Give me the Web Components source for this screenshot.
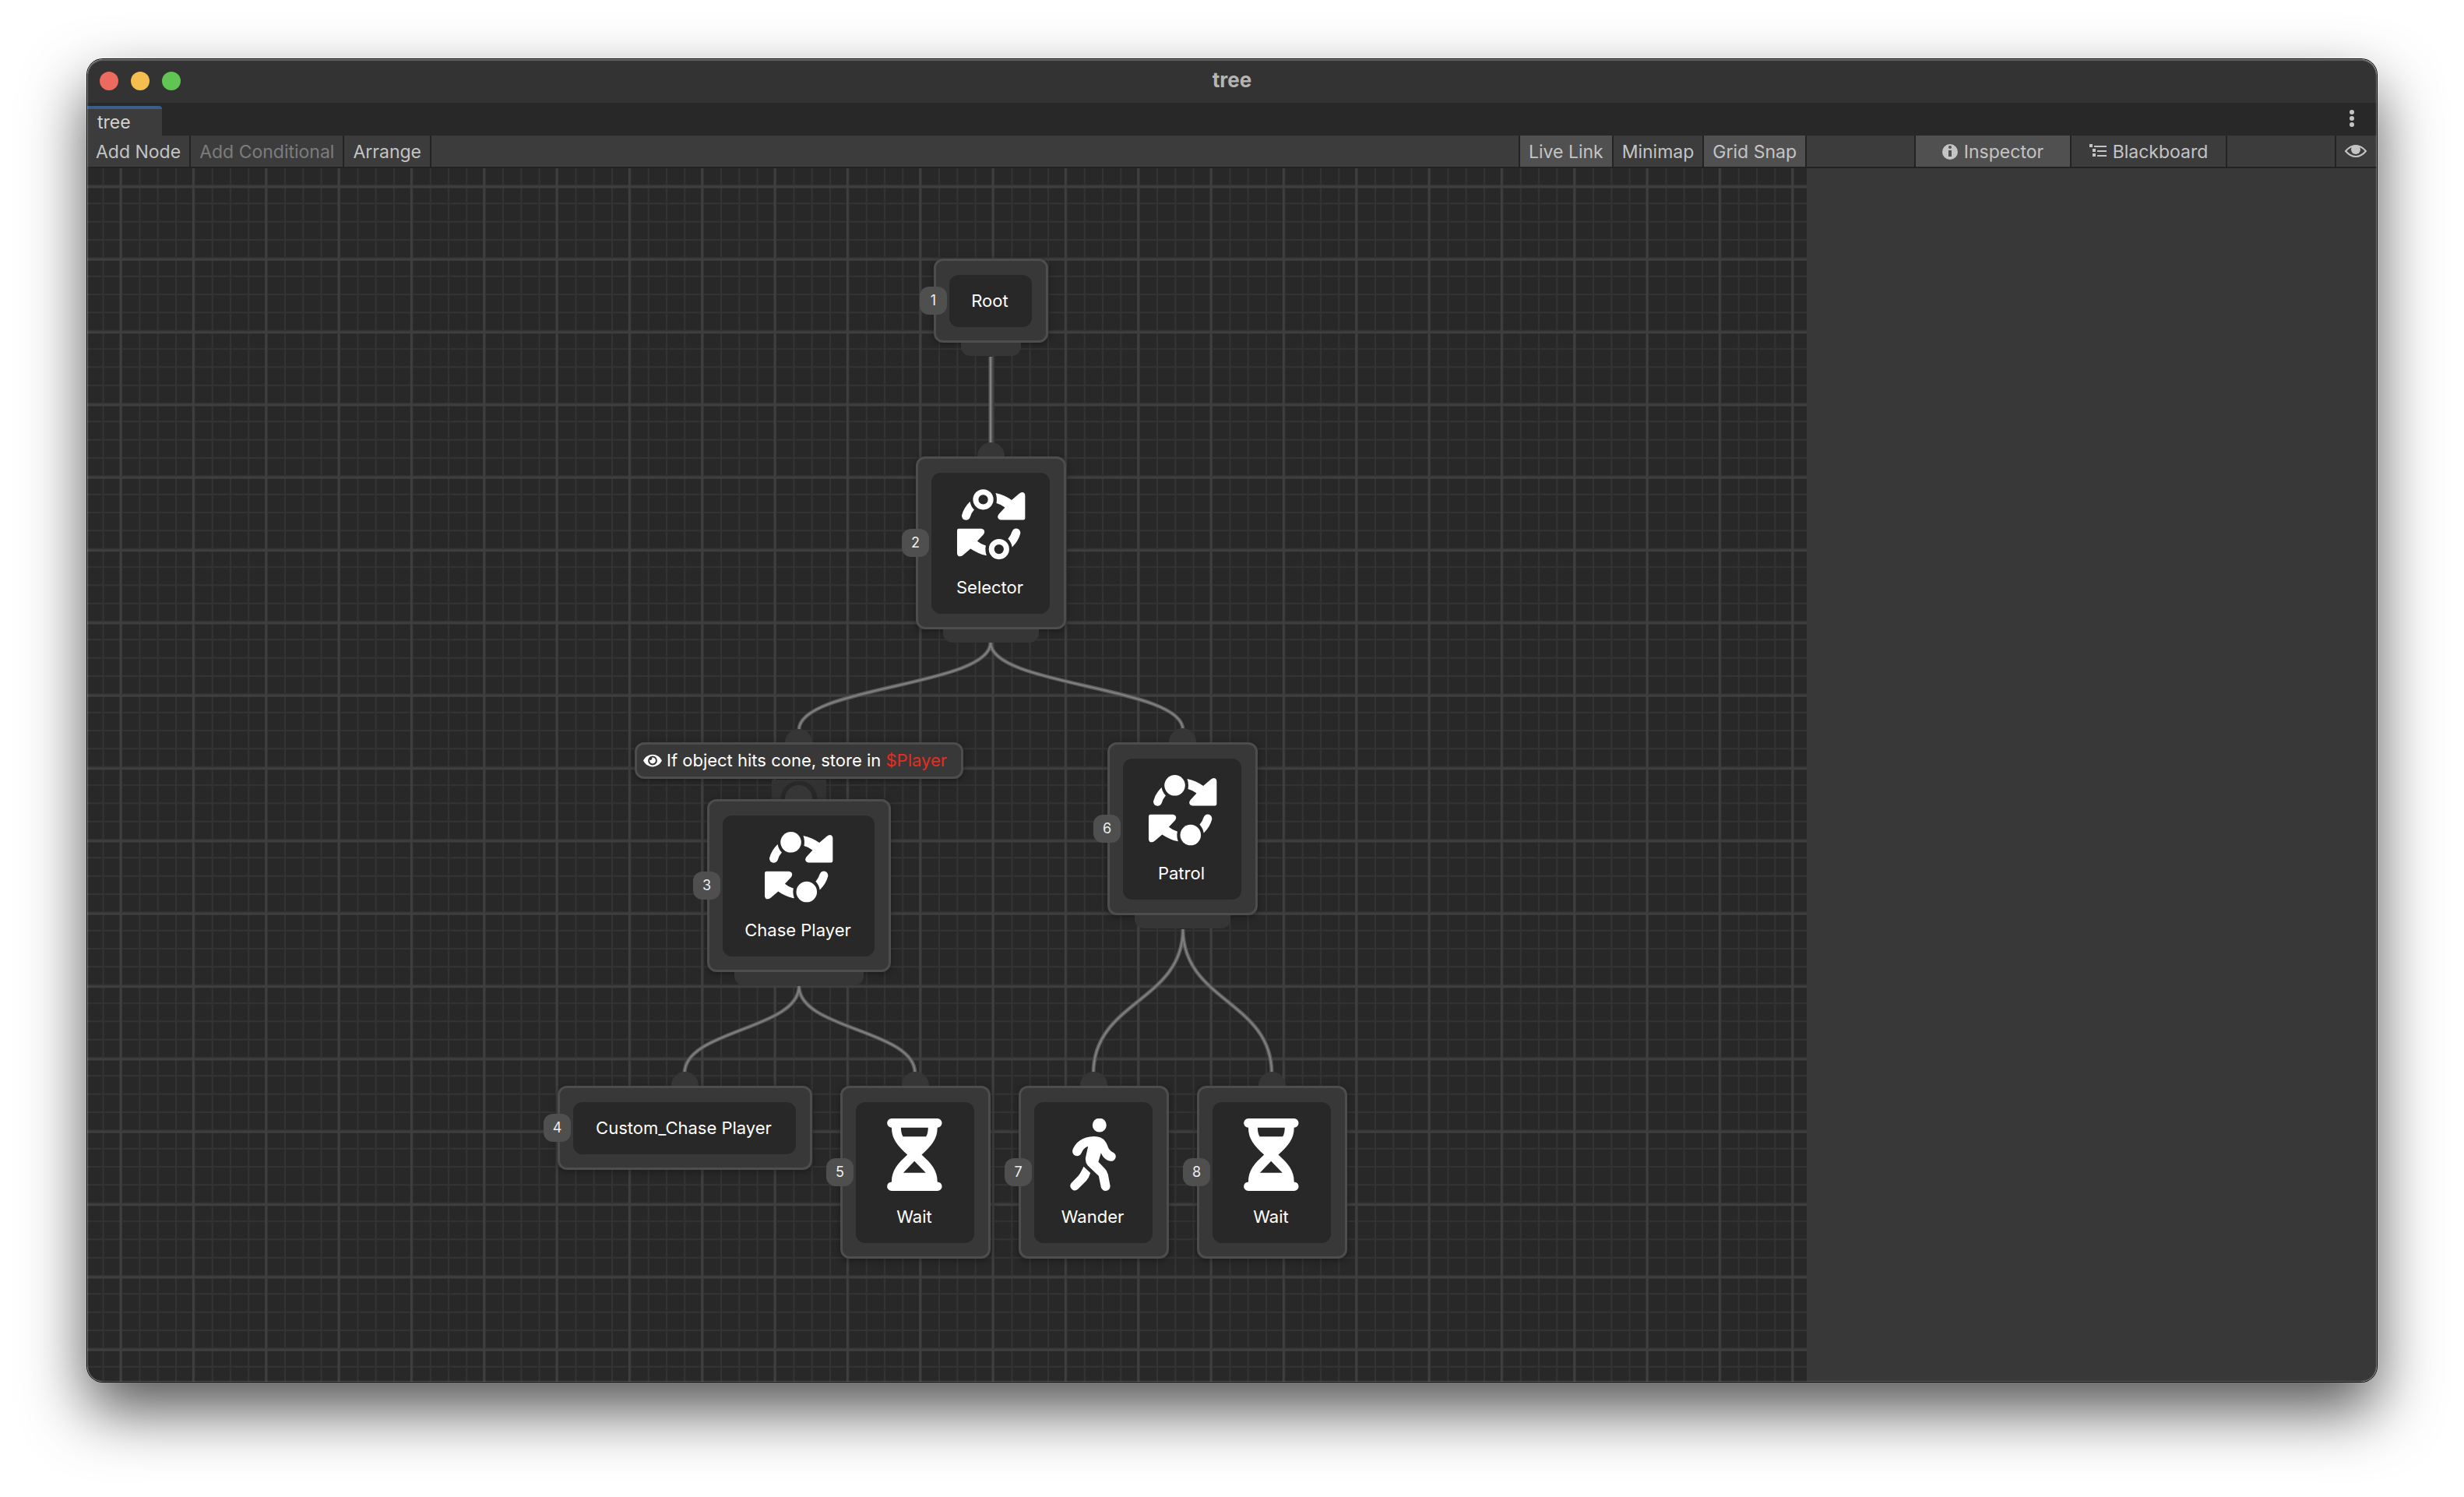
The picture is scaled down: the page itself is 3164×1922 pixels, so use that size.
<!DOCTYPE html>
<html lang="en">
<head>
<meta charset="utf-8">
<title>tree</title>
<style>
  html, body { margin: 0; height: 100%; background: #fff; }
  body {
    box-sizing: border-box;
    padding: 76px 112px 148px;
    overflow: hidden;
    font-family: Inter, "Liberation Sans", sans-serif;
    font-size: 23px;
    line-height: 30px;
    color: #c4c4c4;
    --bar: #3c3c3c;
    --line: #232323;
    --active: #505050;
    --panel: #383838;
    --deep: #282828;
  }
</style>
</head>
<body>
<app-window heading="tree">
  <tab-strip slot="tabs" label="tree"></tab-strip>
  <tool-bar slot="tools">
    <tool-button>Add Node</tool-button>
    <tool-button disabled>Add Conditional</tool-button>
    <tool-button>Arrange</tool-button>
    <tool-button slot="middle" pressed>Live Link</tool-button>
    <tool-button slot="middle">Minimap</tool-button>
    <tool-button slot="middle" pressed>Grid Snap</tool-button>
    <tool-button slot="panel" wide pressed icon="info">Inspector</tool-button>
    <tool-button slot="panel" wide icon="list">Blackboard</tool-button>
    <tool-button slot="end" icon="view" label="Toggle panel"></tool-button>
  </tool-bar>
  <graph-canvas>
    <graph-node index="1" style="left:1087px;top:116px;width:147px" out>Root</graph-node>
    <graph-node index="2" style="left:1064px;top:370px;width:193px" in out icon="selector">Selector</graph-node>
    <condition-node style="left:703px;top:737px;width:422px" variable="$Player">If object hits cone, store in</condition-node>
    <graph-node index="3" style="left:796px;top:810px;width:236px" in out icon="sequence">Chase Player</graph-node>
    <graph-node index="4" style="left:604px;top:1178px;width:327px" in>Custom_Chase Player</graph-node>
    <graph-node index="5" style="left:967px;top:1178px;width:193px" in icon="hourglass">Wait</graph-node>
    <graph-node index="6" style="left:1310px;top:737px;width:193px" in out icon="sequence">Patrol</graph-node>
    <graph-node index="7" style="left:1196px;top:1178px;width:193px" in icon="walk">Wander</graph-node>
    <graph-node index="8" style="left:1425px;top:1178px;width:193px" in icon="hourglass">Wait</graph-node>
  </graph-canvas>
  <side-panel slot="side"></side-panel>
</app-window>

<script>
const cycle = (circle) => `
  <svg viewBox="-5 0 280 280" width="93" height="93" fill="currentColor" aria-hidden="true">
    ${[0, 180].map(a => `<g transform="rotate(${a} 138.5 136)">
      <path d="M156 15C180 20 200 30 218 42L247 17Q257 9 266 14Q270 18 270 24V112Q270 119 263 119H176Q165 117 164 108Q164 102 168 97L192 71Q178 59 159 54Q163 34 156 15Z"/>
      <path d="M57 48Q60 66 73 80Q62 92 58 107Q53 120 41 120Q26 118 25 102Q32 72 57 48Z"/>
      ${circle}</g>`).join("")}
  </svg>`;

const ICONS = {
  selector: cycle(`<circle cx="108" cy="40" r="29" fill="none" stroke="currentColor" stroke-width="21"/>`),
  sequence: cycle(`<circle cx="108" cy="40" r="40"/>`),
  hourglass: `
    <svg viewBox="0 0 280 280" width="93" height="93" fill="currentColor" aria-hidden="true">
      <path fill-rule="evenodd" d="M51 0H228A17 17 0 0 1 228 35C228 80 204 106 167 140C204 174 228 200 228 245A17 17 0 0 1 228 280H51A17 17 0 0 1 51 245C51 200 75 174 112 140C75 106 51 80 51 35A17 17 0 0 1 51 0Z
        M87 35Q87 57 95 70H184Q192 57 192 35ZM139 165L96 210H183Z"/>
    </svg>`,
  walk: `
    <svg viewBox="0 0 280 280" width="93" height="93" fill="currentColor" aria-hidden="true">
      <circle cx="165" cy="26" r="27"/>
      <path d="M144 69C170 69 186 80 194 100C200 116 204 124 216 130A17.500 17.500 0 0 1 204 164C190 160 178 150 171 133L161 168L184 192Q195 202 198 216L206 258A17.500 17.500 0 0 1 171 266L162 222L120 182Q108 168 112 148L121 108Q103 114 95 134A17.500 17.500 0 0 1 62 120C70 96 98 69 144 69Z"/>
      <path d="M104 186L130 211Q124 230 114 241L81 274A17.500 17.500 0 0 1 56 250L83 222Q90 215 104 186Z"/>
    </svg>`,
  eye: `
    <svg viewBox="0 0 576 512" width="24" height="21" fill="currentColor" aria-hidden="true">
      <path d="M572.520 241.400C518.290 135.590 410.930 64 288 64S57.680 135.640 3.480 241.410a32.350 32.350 0 0 0 0 29.190C57.710 376.410 165.070 448 288 448s230.320-71.640 284.520-177.410a32.350 32.350 0 0 0 0-29.190zM288 400a144 144 0 1 1 144-144 143.930 143.930 0 0 1-144 144zm0-240a95.310 95.310 0 0 0-25.310 3.790 47.850 47.850 0 0 1-66.900 66.900A95.780 95.780 0 1 0 288 160z"/>
    </svg>`,
  info: `
    <svg viewBox="0 0 20 20" width="20" height="20" aria-hidden="true">
      <circle cx="10" cy="10" r="10" fill="currentColor"/>
      <circle cx="10" cy="4" r="2" fill="#505050"/>
      <path d="M8 8h4v8h-4z" fill="#505050"/>
    </svg>`,
  list: `
    <svg viewBox="0 0 22 20" width="22" height="20" fill="currentColor" aria-hidden="true">
      <path d="M0 0h4v4h-4zM6 2h16v2h-16zM4 6h4v4h-4zM10 8h12v2h-12zM4 12h4v4h-4zM10 14h12v2h-12z"/>
    </svg>`,
  view: `
    <svg viewBox="0 0 28 18" width="28" height="18" aria-hidden="true">
      <path d="M1 9Q7 2 14 2T27 9Q21 16 14 16T1 9Z" fill="none" stroke="currentColor" stroke-width="2"/>
      <circle cx="14" cy="7" r="6" fill="currentColor"/>
    </svg>`,
  more: `
    <svg viewBox="0 0 6 22" width="6" height="22" fill="currentColor" aria-hidden="true">
      <circle cx="3" cy="3" r="3"/><circle cx="3" cy="11" r="3"/><circle cx="3" cy="19" r="3"/>
    </svg>`
};

class Base extends HTMLElement {
  constructor() { super(); this.attachShadow({ mode: "open" }); }
  connectedCallback() { this.shadowRoot.innerHTML = this.view(); }
  attr(name) { return this.getAttribute(name) || ""; }
}

customElements.define("app-window", class extends Base {
  view() {
    return `<style>
      :host { position: relative; display: flex; flex-direction: column; height: 100%; border-radius: 20px;
        box-shadow: 0 0 0 1px #000, 0 36px 80px rgba(0,0,0,.68); }
      :host::after { content: ""; position: absolute; inset: 0; border-radius: 20px; pointer-events: none;
        box-shadow: inset 0 0 0 1px rgba(255,255,255,.22), inset 0 1px 1px 1px rgba(255,255,255,.2); }
      header { flex: none; display: grid; grid-template-columns: 1fr auto 1fr; align-items: center; height: 56px;
        padding: 0 16px; background: #333; border-radius: 20px 20px 0 0; }
      .lights { display: flex; gap: 16px; }
      .lights button { width: 24px; height: 24px; border: 0; padding: 0; border-radius: 50%; background: #ec6a5e; }
      .lights button:nth-child(2) { background: #f4bf4f; }
      .lights button:nth-child(3) { background: #61c554; }
      h1 { margin: 0; padding-bottom: 2px; font-size: 26px; line-height: 30px; font-weight: 700; color: #b4b4b4; }
      main { flex: 1; display: grid; grid-template-columns: minmax(0, 1fr) 732px; min-height: 0;
        overflow: hidden; border-radius: 0 0 20px 20px; }
    </style>
    <header>
      <div class="lights"><button aria-label="Close"></button><button aria-label="Minimize"></button><button aria-label="Zoom"></button></div>
      <h1>${this.attr("heading")}</h1>
    </header>
    <slot name="tabs"></slot>
    <slot name="tools"></slot>
    <main><slot></slot><slot name="side"></slot></main>`;
  }
});

customElements.define("tab-strip", class extends Base {
  view() {
    return `<style>
      :host { flex: none; display: flex; justify-content: space-between; height: 42px; background: var(--deep); }
      button { font: inherit; color: inherit; border: 0; background: none; padding: 0; }
      .tab { width: 96px; margin-top: 4px; padding: 0 13px; text-align: left; background: var(--bar);
        border-top: 4px solid #3a5f8c; border-radius: 0 4px 0 0; color: #d2d2d2; }
      .more { display: flex; align-items: center; padding: 0 29px 3px; }
    </style>
    <button class="tab" role="tab" aria-selected="true">${this.attr("label")}</button>
    <button class="more" aria-label="More">${ICONS.more}</button>`;
  }
});

customElements.define("tool-bar", class extends Base {
  view() {
    return `<style>
      :host { flex: none; display: grid; grid-template-columns: minmax(0, 1fr) 732px; height: 40px;
        background: var(--bar); border-bottom: 2px solid var(--line); }
      .graph { display: flex; justify-content: space-between; }
      .group { display: flex; }
      .middle, .tabs { border-left: 2px solid var(--line); }
      .panel { display: flex; }
      .center { flex: 1; display: flex; justify-content: center; }
      .tabs { display: flex; }
    </style>
    <div class="graph">
      <div class="group"><slot></slot></div>
      <div class="group middle"><slot name="middle"></slot></div>
    </div>
    <div class="panel">
      <div class="center"><div class="tabs"><slot name="panel"></slot></div></div>
      <slot name="end"></slot>
    </div>`;
  }
});

customElements.define("tool-button", class extends Base {
  view() {
    const icon = this.attr("icon");
    return `<style>
      :host { display: flex; }
      button { display: flex; align-items: center; justify-content: center; gap: 8px; height: 40px;
        margin: 0; padding: 1px 11px 0; border: 0; border-right: 2px solid var(--line); background: none;
        font: inherit; color: inherit; white-space: nowrap; }
      :host([pressed]) button { background: var(--active); }
      :host([wide]) button { width: 200px; }
      :host([slot="end"]) button { border-right: 0; border-left: 2px solid var(--line); padding: 0 13px 0 11px; }
      button:disabled { color: #7c7c7c; }
      svg { display: block; }
    </style>
    <button ${this.hasAttribute("disabled") ? "disabled" : ""} ${this.attr("label") ? `aria-label="${this.attr("label")}"` : ""}
      aria-pressed="${this.hasAttribute("pressed")}">${icon ? ICONS[icon] : ""}<slot></slot></button>`;
  }
});

customElements.define("side-panel", class extends Base {
  view() { return `<style>:host { display: block; background: var(--panel); }</style>`; }
});

customElements.define("graph-canvas", class extends Base {
  view() {
    const edges = [
      [1160, 242, 1160, 354],
      [1160, 609, 914, 721], [1160, 609, 1407, 721],
      [914, 1050, 767, 1162], [914, 1050, 1063, 1162],
      [1407, 977, 1292, 1162], [1407, 977, 1521, 1162]
    ].map(([a, b, c, d]) => `M${a} ${b}C${a} ${(b + d) / 2} ${c} ${(b + d) / 2} ${c} ${d}`).join("");
    const lines = (count, shift) => Array.from({ length: count }, (_, i) => (i * 280 / count + shift).toFixed(2));
    return `<style>
      :host { position: relative; display: block; overflow: hidden; background: var(--deep); }
      svg { position: absolute; inset: 0; width: 100%; height: 100%; }
    </style>
    <svg aria-hidden="true">
      <defs>
        <pattern id="grid" width="280" height="280" patternUnits="userSpaceOnUse" x="33" y="14">
          <path stroke="#333" stroke-width="2" d="${lines(12, 11).map(p => `M${p} 0V280`).join("")}${lines(12, 8).map(p => `M0 ${p}H280`).join("")}"/>
          <path stroke="#3e3e3e" stroke-width="3" d="${lines(3, 10).map(p => `M${p} 0V280M0 ${p}H280`).join("")}"/>
        </pattern>
      </defs>
      <rect width="100%" height="100%" fill="url(#grid)"/>
      <path d="${edges}" fill="none" stroke="#5c5c5c" stroke-width="5"/>
      <path d="${edges}" fill="none" stroke="#808080" stroke-width="2"/>
    </svg>
    <slot></slot>`;
  }
});

customElements.define("graph-node", class extends Base {
  view() {
    const icon = this.attr("icon");
    return `<style>
      :host { position: absolute; box-sizing: border-box; display: block; padding: 18px 18px 17px 17px;
        border: 3px solid #4d4d4d; border-radius: 12px; background: var(--panel);
        box-shadow: 0 2px 8px rgba(0,0,0,.35); font-size: 22px; line-height: 25px; color: #fff; }
      .body { display: flex; flex-direction: column; align-items: center; gap: 21px; padding: 21px 2px 21px 0;
        border-radius: 12px; background: var(--deep); white-space: nowrap; }
      svg { display: block; }
      .badge { position: absolute; left: -21px; top: 50%; transform: translateY(-50%); width: 35px;
        border-radius: 12px; background: #4f4f4f; text-align: center; font-size: 18px; line-height: 36px; color: #eee; }
      .in { position: absolute; left: 50%; bottom: calc(100% + 3px); width: 35px; height: 18px; margin-left: -18px;
        border-radius: 18px 18px 0 0; background: #363636; }
      .out { position: absolute; left: 32px; right: 32px; top: calc(100% + 3px); height: 17px;
        border-radius: 0 0 12px 12px; background: #363636; }
    </style>
    ${this.hasAttribute("in") ? `<span class="in"></span>` : ""}
    ${this.hasAttribute("out") ? `<span class="out"></span>` : ""}
    <div class="body">${icon ? ICONS[icon] : ""}<span><slot></slot></span></div>
    <span class="badge">${this.attr("index")}</span>`;
  }
});

customElements.define("condition-node", class extends Base {
  view() {
    return `<style>
      :host { position: absolute; box-sizing: border-box; display: flex; align-items: center; gap: 6px; height: 47px;
        padding: 0 8px; border: 3px solid #4d4d4d; border-radius: 12px; background: var(--panel);
        box-shadow: 0 2px 8px rgba(0,0,0,.35); font-size: 22px; line-height: 25px; color: #fff; white-space: nowrap; }
      b { font-weight: 400; color: #e52d22; }
      .in { position: absolute; left: 50%; bottom: calc(100% + 3px); width: 35px; height: 17px; margin-left: -18px;
        border-radius: 18px 18px 0 0; background: #363636; }
      .socket { position: absolute; left: 50%; top: calc(100% + 4px); width: 70px; height: 25px; margin-left: -35px;
        background: radial-gradient(circle at 50% 100%, var(--deep) 23px, #323232 24px); }
    </style>
    <span class="in"></span><span class="socket"></span>
    ${ICONS.eye}<span><slot></slot> <b>${this.attr("variable")}</b></span>`;
  }
});
</script>
</body>
</html>
